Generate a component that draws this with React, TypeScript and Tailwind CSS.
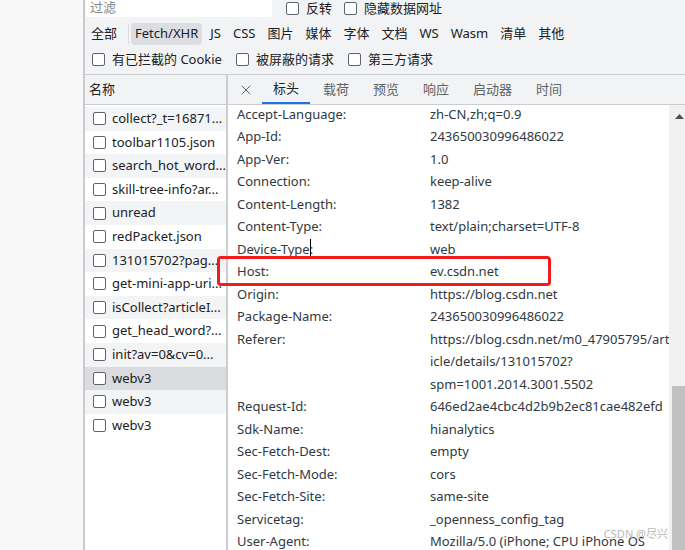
import { X } from "lucide-react";

const font = { fontFamily: '"Noto Sans", "Noto Sans CJK SC", sans-serif' };

const requests = [
  "collect?_t=16871...",
  "toolbar1105.json",
  "search_hot_word...",
  "skill-tree-info?ar...",
  "unread",
  "redPacket.json",
  "131015702?pag...",
  "get-mini-app-uri...",
  "isCollect?articleI...",
  "get_head_word?...",
  "init?av=0&cv=0...",
  "webv3",
  "webv3",
  "webv3",
];

const headers: [string, string[]][] = [
  ["Accept-Language:", ["zh-CN,zh;q=0.9"]],
  ["App-Id:", ["243650030996486022"]],
  ["App-Ver:", ["1.0"]],
  ["Connection:", ["keep-alive"]],
  ["Content-Length:", ["1382"]],
  ["Content-Type:", ["text/plain;charset=UTF-8"]],
  ["Device-Type:", ["web"]],
  ["Host:", ["ev.csdn.net"]],
  ["Origin:", ["https://blog.csdn.net"]],
  ["Package-Name:", ["243650030996486022"]],
  ["Referer:", ["https://blog.csdn.net/m0_47905795/art", "icle/details/131015702?", "spm=1001.2014.3001.5502"]],
  ["Request-Id:", ["646ed2ae4cbc4d2b9b2ec81cae482efd"]],
  ["Sdk-Name:", ["hianalytics"]],
  ["Sec-Fetch-Dest:", ["empty"]],
  ["Sec-Fetch-Mode:", ["cors"]],
  ["Sec-Fetch-Site:", ["same-site"]],
  ["Servicetag:", ["_openness_config_tag"]],
  ["User-Agent:", ["Mozilla/5.0 (iPhone; CPU iPhone OS"]],
];

const types = ["JS", "CSS", "图片", "媒体", "字体", "文档", "WS", "Wasm", "清单", "其他"];
const tabs = ["标头", "载荷", "预览", "响应", "启动器", "时间"];

function Box() {
  return <span className="w-[13px] h-[13px] rounded-[2px] border border-[#5f6368] bg-white shrink-0" />;
}

export default function App() {
  return (
    <div className="flex w-[685px] h-[550px] overflow-hidden bg-[#f7f8f7] text-[13px] text-[#202124]" style={font}>
      <div className="w-[83px] shrink-0" />
      <div className="flex-1 flex flex-col border-l-2 border-[#c9cbcf] min-w-0">
        {/* Toolbar */}
        <div className="h-[75px] shrink-0 bg-[#f1f3f4] border-b border-[#cbcdd1] flex flex-col">
          <div className="h-[17px] flex items-center">
            <div className="ml-[1px] w-[186px] h-[17px] bg-white text-[#80868b] pl-[4px] leading-[15px]">过滤</div>
            <div className="flex items-center gap-[7px] ml-[14px]">
              <Box />
              <span>反转</span>
            </div>
            <div className="flex items-center gap-[7px] ml-[12px]">
              <Box />
              <span>隐藏数据网址</span>
            </div>
          </div>
          <div className="h-[34px] flex items-center pl-[6px]">
            <span>全部</span>
            <span className="w-px h-[20px] bg-[#dadce0] ml-[11px] mr-[2px]" />
            <span className="px-[4px] h-[22px] rounded-[4px] bg-[#dcdee2] flex items-center">Fetch/XHR</span>
            <div className="flex items-center gap-[12px] ml-[8px]">
              {types.map((t) => (
                <span key={t}>{t}</span>
              ))}
            </div>
          </div>
          <div className="h-[17px] flex items-center pl-[7px]">
            <div className="flex items-center gap-[7px]">
              <Box />
              <span>有已拦截的 Cookie</span>
            </div>
            <div className="flex items-center gap-[7px] ml-[14px]">
              <Box />
              <span>被屏蔽的请求</span>
            </div>
            <div className="flex items-center gap-[7px] ml-[14px]">
              <Box />
              <span>第三方请求</span>
            </div>
          </div>
        </div>

        {/* Main */}
        <div className="flex-1 flex min-h-0">
          {/* Request list */}
          <div className="w-[143px] shrink-0 border-r-2 border-[#cbcdd1] bg-white flex flex-col">
            <div className="h-[30px] shrink-0 bg-[#f1f3f4] border-b border-[#cbcdd1] flex items-center pl-[4px]">名称</div>
            <div className="flex flex-col pt-[2px]">
              {requests.map((r, i) => (
                <div
                  key={i}
                  className={`h-[23.6px] flex items-center gap-[6px] pl-[8px] whitespace-nowrap overflow-hidden ${
                    i === 11 ? "bg-[#dadce0]" : i % 2 === 0 ? "bg-[#f3f4f5]" : "bg-white"
                  }`}
                >
                  <Box />
                  <span>{r}</span>
                </div>
              ))}
            </div>
          </div>

          {/* Detail panel */}
          <div className="flex-1 flex flex-col min-w-0 bg-white">
            <div className="h-[30px] shrink-0 bg-[#f1f3f4] border-b border-[#cbcdd1] flex items-stretch">
              <div className="w-[34px] flex items-center justify-center pl-[2px]">
                <X size={16} strokeWidth={1.5} className="text-[#5f6368]" />
              </div>
              {tabs.map((t, i) => (
                <div
                  key={t}
                  className={`flex items-center px-[11px] mr-[2px] ${
                    i === 0 ? "border-b-2 border-[#1a73e8] text-[#202124]" : "text-[#5f6368]"
                  }`}
                >
                  {t}
                </div>
              ))}
            </div>
            <div className="flex-1 flex min-h-0 relative">
              <div className="flex-1 pl-[9px] mt-[-2px] text-[#303942]">
                {headers.map(([name, vals]) => (
                  <div key={name} className="grid grid-cols-[193px_1fr]">
                    <div className="h-[22.53px] flex items-center whitespace-nowrap">
                      {name === "Device-Type:" ? (
                        <span className="relative">
                          {name}
                          <span className="absolute right-[2px] top-[-1px] w-px h-[17px] bg-black" />
                        </span>
                      ) : (
                        name
                      )}
                    </div>
                    <div className="flex flex-col">
                      {vals.map((v) => (
                        <div key={v} className="h-[22.53px] flex items-center whitespace-nowrap">
                          {v}
                        </div>
                      ))}
                    </div>
                  </div>
                ))}
              </div>
              {/* Scrollbar */}
              <div className="w-[21px] shrink-0 bg-[#f1f1f1] flex flex-col items-center">
                <svg width="9" height="5" viewBox="0 0 9 5" className="mt-[9px]">
                  <path d="M0 5 L4.5 0 L9 5 Z" fill="#505050" />
                </svg>
                <div className="mt-auto w-[16px] h-[164px] bg-[#c1c1c1]" />
              </div>
              {/* Annotation box */}
              <div className="absolute left-[-11px] top-[151px] w-[334px] h-[30px] border-[3px] border-[#f01d1d] rounded-[4px]" />
              <div className="absolute right-[17px] bottom-[11px] text-[11px] text-[#b8b8b8] leading-none">CSDN @尽兴</div>
            </div>
          </div>
        </div>
      </div>
    </div>
  );
}
